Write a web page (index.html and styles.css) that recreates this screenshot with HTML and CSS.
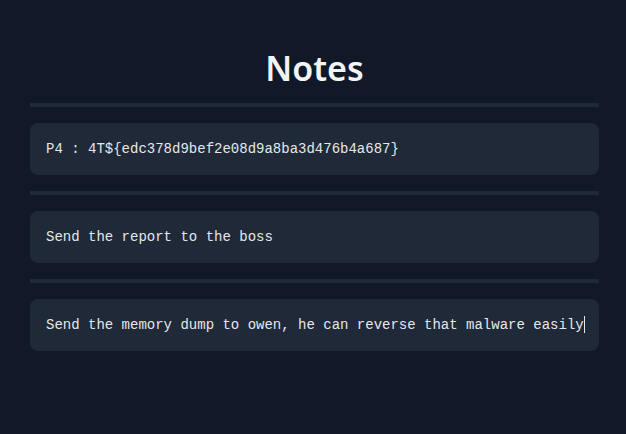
FILE: index.html
```html
<!DOCTYPE html>
<html>
<head>
<meta charset="utf-8">
<link rel="stylesheet" href="styles.css">
</head>
<body>
<main class="page">
  <h1 class="title">Notes</h1>
  <div class="list">
    <hr class="sep">
    <div class="note">P4 : 4T${edc378d9bef2e08d9a8ba3d476b4a687}</div>
    <hr class="sep">
    <div class="note">Send the report to the boss</div>
    <hr class="sep">
    <div class="note">Send the memory dump to owen, he can reverse that malware easily<span class="caret"></span></div>
  </div>
</main>
</body>
</html>
```
FILE: styles.css
```css
html, body {
  margin: 0;
  padding: 0;
  background: #111827;
  height: 100%;
}
.page {
  padding: 45px 27px 0 30px;
}
.title {
  margin: 0;
  text-align: center;
  font-family: "Noto Sans", sans-serif;
  font-weight: 600;
  font-size: 34px;
  line-height: 46px;
  color: #f3f4f6;
}
.list {
  display: flex;
  flex-direction: column;
  gap: 16px;
  margin-top: 12px;
}
.sep {
  margin: 0;
  border: 0;
  height: 4px;
  background: #1f2937;
}
.note {
  background: #1f2937;
  border-radius: 8px;
  padding: 16px;
  font-family: "Liberation Mono", monospace;
  font-size: 14px;
  line-height: 20px;
  color: #e5e7eb;
  white-space: pre;
}
.caret {
  display: inline-block;
  width: 1px;
  height: 17px;
  background: #e5e7eb;
  vertical-align: -4px;
}
```
